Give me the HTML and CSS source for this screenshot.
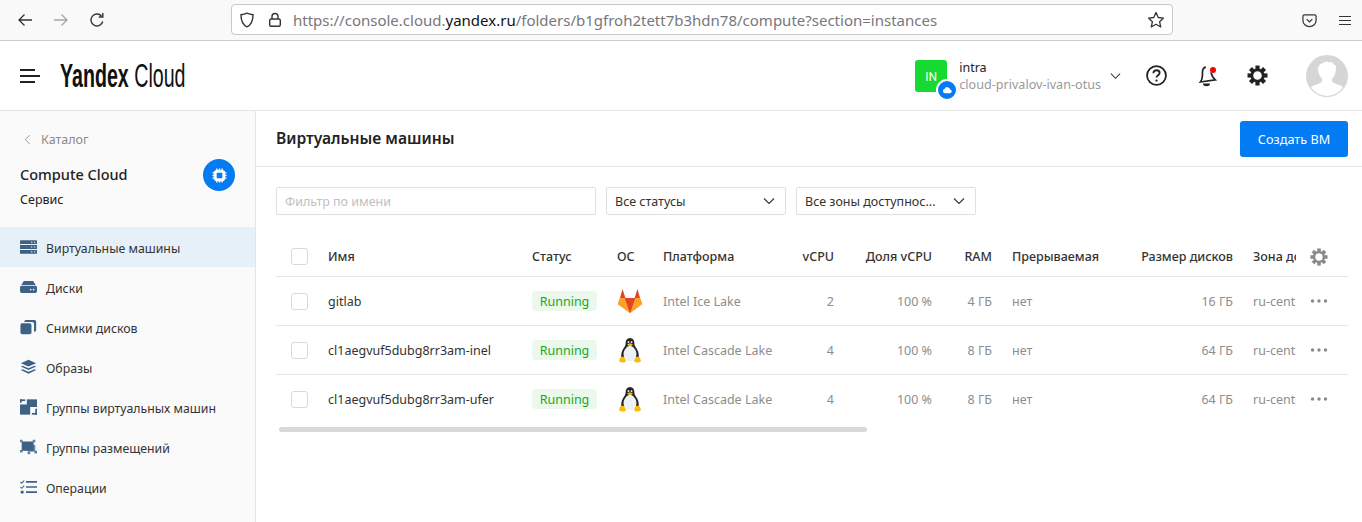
FILE: index.html
```html
<!DOCTYPE html>
<html lang="en">

<head>
    <meta charset="UTF-8">
    <title>Виртуальные машины</title>
    <link rel="stylesheet" href="styles.css">
</head>

<body>
    <svg class="defs" width="0" height="0">
        <symbol id="gear" viewBox="0 0 20 20">
            <circle cx="10" cy="10" r="5.400" fill="none" stroke="currentColor" stroke-width="2.600"/>
            <g fill="currentColor">
                <rect x="8" y="0.500" width="4" height="4"/>
                <rect x="8" y="15.500" width="4" height="4"/>
                <rect x="0.500" y="8" width="4" height="4"/>
                <rect x="15.500" y="8" width="4" height="4"/>
                <rect x="8" y="0.500" width="4" height="4" transform="rotate(45 10 10)"/>
                <rect x="8" y="15.500" width="4" height="4" transform="rotate(45 10 10)"/>
                <rect x="0.500" y="8" width="4" height="4" transform="rotate(45 10 10)"/>
                <rect x="15.500" y="8" width="4" height="4" transform="rotate(45 10 10)"/>
            </g>
        </symbol>
        <symbol id="tux" viewBox="0 0 24 28">
            <path d="M12 1C9 1 7.500 3.300 7.500 6c0 2.500-.5 3.500-2 5.500C3.800 14 2.500 17 3 21l18 0c.5-4-.8-7-2.500-9.500-1.500-2-2-3-2-5.500C16.500 3.300 15 1 12 1z" fill="#24242a"/>
            <path d="M12 9C9 9 5.300 13.500 5.300 17.500c0 4.500 2.700 7.500 6.700 7.500s6.700-3 6.700-7.500C18.700 13.500 15 9 12 9z" fill="#eef1f3"/>
            <path d="M9.300 7.400c1-.8 4.400-.8 5.400 0 .4.400-1.500 2.200-2.700 2.200S8.900 7.800 9.300 7.400z" fill="#f7b90f"/>
            <circle cx="10.400" cy="5.300" r="1" fill="#fff"/>
            <circle cx="13.600" cy="5.300" r="1" fill="#fff"/>
            <path d="M4 20.500c1.300-.3 2.200.8 2.800 2 .6 1.200 1.200 2 .8 2.900-.6 1-2.700 1.300-4 1-1.200-.2-2.500-.9-3-1.400-.4-.5.600-1.400.7-2.300.1-.9.700-1.900 2.700-2.200zM20 20.500c-1.300-.3-2.200.8-2.800 2-.6 1.200-1.200 2-.8 2.900.6 1 2.700 1.300 4 1 1.200-.2 2.500-.9 3-1.400.4-.5-.6-1.400-.7-2.300-.1-.9-.7-1.900-2.700-2.200z" fill="#fcb90c"/>
        </symbol>
        <symbol id="chevron" viewBox="0 0 12 8">
            <path d="M1 1.500l5 5 5-5" fill="none" stroke="currentColor" stroke-width="1.100"/>
        </symbol>
        <symbol id="dots" viewBox="0 0 18 4">
            <circle cx="2.500" cy="2" r="1.700" fill="currentColor"/>
            <circle cx="9" cy="2" r="1.700" fill="currentColor"/>
            <circle cx="15.500" cy="2" r="1.700" fill="currentColor"/>
        </symbol>
    </svg>

    <div class="browser-bar">
        <svg class="nav-icon nav-back" viewBox="0 0 16 16"><path d="M15 8H2M7.500 2.500L2 8l5.500 5.500" fill="none" stroke="currentColor" stroke-width="1.300"/></svg>
        <svg class="nav-icon nav-forward" viewBox="0 0 16 16"><path d="M1 8h13M8.500 2.500L14 8l-5.500 5.500" fill="none" stroke="currentColor" stroke-width="1.300"/></svg>
        <svg class="nav-icon nav-reload" viewBox="0 0 16 16"><path d="M13.800 9.500A6 6 0 1 1 12.500 4M13.800 1v4h-4" fill="none" stroke="currentColor" stroke-width="1.400"/></svg>
        <div class="url-box">
            <svg class="url-shield" viewBox="0 0 16 16"><path d="M8 1.200c2 1 4 1.400 6 1.500 0 6-1.500 10-6 12.100C3.500 12.700 2 8.700 2 2.700c2-.1 4-.5 6-1.500z" fill="none" stroke="#33333a" stroke-width="1.400"/></svg>
            <svg class="url-lock" viewBox="0 0 14 16"><path d="M4 7V4.500a3 3 0 0 1 6 0V7" fill="none" stroke="#33333a" stroke-width="1.400"/><rect x="1.700" y="7" width="10.600" height="7.300" rx="1.500" fill="none" stroke="#33333a" stroke-width="1.400"/></svg>
            <span class="url-text">https://console.cloud.<b>yandex.ru</b>/folders/b1gfroh2tett7b3hdn78/compute?section=instances</span>
            <svg class="url-star" viewBox="0 0 18 18"><path d="M9 1.500l2.300 5 5.200.6-3.900 3.600 1.100 5.300L9 13.300 4.300 16l1.100-5.300L1.500 7.100l5.200-.6z" fill="none" stroke="#33333a" stroke-width="1.300" stroke-linejoin="round"/></svg>
        </div>
        <svg class="pocket" viewBox="0 0 16 16"><path d="M2.500 2h11A1.500 1.500 0 0 1 15 3.500V8a7 6.500 0 0 1-14 0V3.500A1.500 1.500 0 0 1 2.500 2z" fill="none" stroke="#33333a" stroke-width="1.300"/><path d="M5 6.500l3 3 3-3" fill="none" stroke="#33333a" stroke-width="1.300"/></svg>
        <div class="burger burger-browser"><i></i><i></i><i></i></div>
    </div>

    <header class="top">
        <div class="burger burger-menu"><i class="short"></i><i></i><i class="short"></i></div>
        <div class="logo"><div class="logo-text"><b>Yandex</b> <span>Cloud</span></div></div>

        <div class="org">
            <div class="org-badge">IN
                <span class="org-cloud">
                    <svg viewBox="0 0 12 8"><path d="M3 7.500a2.300 2.300 0 0 1-.3-4.500 3.300 3.300 0 0 1 6.300.4A2.100 2.100 0 0 1 9 7.500z" fill="#fff"/></svg>
                </span>
            </div>
            <div class="org-text">
                <div class="org-name">intra</div>
                <div class="org-cloud-name">cloud-privalov-ivan-otus</div>
            </div>
            <svg class="org-chevron"><use href="#chevron"/></svg>
        </div>

        <svg class="top-icon help" viewBox="0 0 20 20">
            <circle cx="10" cy="10" r="9" fill="none" stroke="currentColor" stroke-width="1.700"/>
            <path d="M7 7.800c0-1.800 1.400-2.800 3-2.800s3 1 3 2.600c0 2.200-3 2.200-3 4.400" fill="none" stroke="currentColor" stroke-width="1.700"/>
            <circle cx="10" cy="14.800" r="1.100" fill="currentColor"/>
        </svg>
        <div class="bell">
            <svg viewBox="0 0 20 22">
                <path d="M10 2C6.800 2 6 4.500 5.700 8c-.3 3.500-1.200 6-3.200 8l15 0c-2-2-2.900-4.500-3.200-8" fill="none" stroke="currentColor" stroke-width="1.700" transform="rotate(-8 10 10)"/>
                <path d="M6 18.500a3.500 2.800 0 0 0 7 0z" fill="currentColor"/>
            </svg>
            <span class="bell-dot"></span>
        </div>
        <svg class="top-icon settings"><use href="#gear"/></svg>
        <div class="avatar">
            <svg viewBox="0 0 42 42"><path d="M20 6.500l3 .8 3-.3 2 2.500 2 1.500-.2 4c-.2 3.500-1.500 6.500-3.800 9-.5 2 .5 3.500 3 4.500 4 1.500 6.500 2 8 4A21 21 0 0 1 21 41 21 21 0 0 1 5 32.500c1.500-2 4-2.500 8-4 2.500-1 3.500-2.500 3-4.500-2-2.500-3.700-5.500-4-9-.2-2.500.5-4 2-5.500z" fill="#fff"/></svg>
        </div>
    </header>

    <div class="layout">
        <aside class="sidebar">
            <div class="back">
                <svg viewBox="0 0 8 12"><path d="M6.500 1L1.500 6l5 5" fill="none" stroke="currentColor" stroke-width="1"/></svg>
                Каталог
            </div>
            <div class="service">
                <div>
                    <div class="service-name">Compute Cloud</div>
                    <div class="service-type">Сервис</div>
                </div>
                <span class="service-icon">
                    <svg viewBox="0 0 16 16">
                        <rect x="3.500" y="3.500" width="9" height="9" rx="1.500" fill="none" stroke="#fff" stroke-width="3"/>
                        <path d="M5.200 .5v3M8 .5v3M10.800 .5v3M5.200 12.500v3M8 12.500v3M10.800 12.500v3M.5 5.200h3M.5 8h3M.5 10.800h3M12.500 5.200h3M12.500 8h3M12.500 10.800h3" stroke="#fff" stroke-width="1.500"/>
                    </svg>
                </span>
            </div>
            <nav class="menu">
                <a class="menu-item active">
                    <svg viewBox="0 0 20 16"><path d="M1 0h18a1 1 0 0 1 1 1v3.600H0V1a1 1 0 0 1 1-1zM0 5.700h20v4.600H0zM0 11.400h20V15a1 1 0 0 1-1 1H1a1 1 0 0 1-1-1z" fill="currentColor"/><path d="M13 2.300h1.500M16.500 2.300H18M13 8h1.500M16.500 8H18M13 13.700h1.500M16.500 13.700H18" stroke="#e6f0f8" stroke-width="1.200"/></svg>
                    Виртуальные машины
                </a>
                <a class="menu-item">
                    <svg viewBox="0 0 20 16"><path d="M4.500 1h11l3 4.500H1.500z" fill="currentColor"/><path d="M2 6.500h16a2 2 0 0 1 2 2V13a2 2 0 0 1-2 2H2a2 2 0 0 1-2-2V8.500a2 2 0 0 1 2-2z" fill="currentColor"/><circle cx="12.500" cy="11" r="1" fill="#fafafa"/><circle cx="16" cy="11" r="1" fill="#fafafa"/></svg>
                    Диски
                </a>
                <a class="menu-item">
                    <svg viewBox="0 0 20 18"><rect x="0.500" y="4.500" width="13" height="13" rx="2" fill="currentColor"/><path d="M5 2.700V3h9.500a2.500 2.500 0 0 1 2 2v9.500h.5a2 2 0 0 0 2-2V2.700a2 2 0 0 0-2-2H7a2 2 0 0 0-2 2z" fill="currentColor"/></svg>
                    Снимки дисков
                </a>
                <a class="menu-item">
                    <svg viewBox="0 0 20 17"><path d="M10 0l9 4-9 4-9-4z" fill="currentColor"/><path d="M1 8l2-1 7 3 7-3 2 1-9 4z" fill="currentColor"/><path d="M1 12l2-1 7 3 7-3 2 1-9 4.500z" fill="currentColor"/></svg>
                    Образы
                </a>
                <a class="menu-item">
                    <svg viewBox="0 0 20 18"><rect x="0" y="6" width="12" height="12" fill="currentColor"/><rect x="8" y="0" width="12" height="9" fill="currentColor"/><rect x="0" y="0" width="6" height="2" fill="currentColor"/><rect x="0" y="0" width="2" height="4" fill="currentColor"/><rect x="14" y="16" width="6" height="2" fill="currentColor"/><rect x="18" y="11" width="2" height="7" fill="currentColor"/></svg>
                    Группы виртуальных машин
                </a>
                <a class="menu-item">
                    <svg viewBox="0 0 20 17"><rect x="2" y="2" width="14" height="11" fill="currentColor"/><rect x="9" y="6" width="9" height="8" fill="currentColor" opacity=".75"/><path d="M0 0h3v3H0zM15 0h3v3h-3zM0 12h3v3H0zM17 13h3v3h-3zM9 14h3v3H9z" fill="currentColor" opacity=".8"/></svg>
                    Группы размещений
                </a>
                <a class="menu-item">
                    <svg viewBox="0 0 20 16"><path d="M7 2h13M7 8h13M7 14h13" stroke="currentColor" stroke-width="2"/><path d="M.5 2l1.500 1.500L5 .5M.5 8L2 9.500l3-3" fill="none" stroke="currentColor" stroke-width="1.200"/><circle cx="2.500" cy="14" r="2" fill="currentColor"/></svg>
                    Операции
                </a>
            </nav>
        </aside>

        <main class="content">
            <div class="title-row">
                <h1 class="title">Виртуальные машины</h1>
                <button class="create">Создать ВМ</button>
            </div>

            <div class="filters">
                <div class="filter-input">Фильтр по имени</div>
                <div class="select">Все статусы <svg><use href="#chevron"/></svg></div>
                <div class="select">Все зоны доступнос... <svg><use href="#chevron"/></svg></div>
            </div>

            <div class="table">
                <div class="row head">
                    <div class="cell"><span class="check check-head"></span></div>
                    <div class="cell">Имя</div>
                    <div class="cell">Статус</div>
                    <div class="cell">ОС</div>
                    <div class="cell">Платформа</div>
                    <div class="cell right">vCPU</div>
                    <div class="cell right">Доля vCPU</div>
                    <div class="cell right">RAM</div>
                    <div class="cell">Прерываемая</div>
                    <div class="cell right">Размер дисков</div>
                    <div class="cell clip">Зона доступности</div>
                    <div class="cell action"><svg class="head-gear"><use href="#gear"/></svg></div>
                </div>

                <div class="row">
                    <div class="cell"><span class="check"></span></div>
                    <div class="cell name">gitlab</div>
                    <div class="cell"><span class="status">Running</span></div>
                    <div class="cell">
                        <svg class="os-icon gitlab" viewBox="0 0 26 24">
                            <path d="M13 24L0.800 15 3 9h20l2.200 6z" fill="#fc6d26"/>
                            <path d="M13 24L0.800 15 3 9h4.800z" fill="#fca326"/>
                            <path d="M13 24l12.200-9L23 9h-4.800z" fill="#fca326"/>
                            <path d="M13 24L7.800 9h10.400z" fill="#e24329"/>
                            <path d="M3 9L5.500 0l2.900 9zM23 9L20.500 0l-2.900 9z" fill="#e24329"/>
                        </svg>
                    </div>
                    <div class="cell muted">Intel Ice Lake</div>
                    <div class="cell right muted">2</div>
                    <div class="cell right muted">100 %</div>
                    <div class="cell right muted">4 ГБ</div>
                    <div class="cell muted">нет</div>
                    <div class="cell right muted">16 ГБ</div>
                    <div class="cell clip muted">ru-central1-a</div>
                    <div class="cell action"><svg class="dots"><use href="#dots"/></svg></div>
                </div>

                <div class="row">
                    <div class="cell"><span class="check"></span></div>
                    <div class="cell name">cl1aegvuf5dubg8rr3am-inel</div>
                    <div class="cell"><span class="status">Running</span></div>
                    <div class="cell"><svg class="os-icon"><use href="#tux"/></svg></div>
                    <div class="cell muted">Intel Cascade Lake</div>
                    <div class="cell right muted">4</div>
                    <div class="cell right muted">100 %</div>
                    <div class="cell right muted">8 ГБ</div>
                    <div class="cell muted">нет</div>
                    <div class="cell right muted">64 ГБ</div>
                    <div class="cell clip muted">ru-central1-a</div>
                    <div class="cell action"><svg class="dots"><use href="#dots"/></svg></div>
                </div>

                <div class="row last">
                    <div class="cell"><span class="check"></span></div>
                    <div class="cell name">cl1aegvuf5dubg8rr3am-ufer</div>
                    <div class="cell"><span class="status">Running</span></div>
                    <div class="cell"><svg class="os-icon"><use href="#tux"/></svg></div>
                    <div class="cell muted">Intel Cascade Lake</div>
                    <div class="cell right muted">4</div>
                    <div class="cell right muted">100 %</div>
                    <div class="cell right muted">8 ГБ</div>
                    <div class="cell muted">нет</div>
                    <div class="cell right muted">64 ГБ</div>
                    <div class="cell clip muted">ru-central1-a</div>
                    <div class="cell action"><svg class="dots"><use href="#dots"/></svg></div>
                </div>
            </div>

            <div class="scrollbar"></div>
        </main>
    </div>
</body>

</html>
```

FILE: styles.css
```css
* {
    box-sizing: border-box;
}

html,
body {
    height: 522px;
    margin: 0;
    overflow: hidden;
}

body {
    display: flex;
    flex-direction: column;
    font-family: "Noto Sans", sans-serif;
    font-size: 12.500px;
    color: #2b2b2b;
    background: #fff;
}

.defs {
    display: none;
}

/* browser chrome */
.browser-bar {
    display: flex;
    align-items: center;
    height: 41px;
    flex: none;
    padding-left: 17px;
    background: #f9f9fa;
    border-bottom: 1px solid #ccc;
}

.nav-icon {
    width: 16px;
    height: 16px;
    color: #33333a;
}

.nav-forward {
    margin-left: 20px;
    color: #a5a5a8;
}

.nav-reload {
    margin-left: 20px;
}

.url-box {
    display: flex;
    align-items: center;
    width: 942px;
    height: 31px;
    margin-left: 126px;
    margin-top: -1px;
    padding: 0 7px;
    background: #fff;
    border: 1px solid #c8c8c8;
    border-radius: 4px;
}

.url-shield {
    width: 16px;
    height: 16px;
}

.url-lock {
    width: 14px;
    height: 16px;
    margin-left: 13px;
}

.url-text {
    margin-left: 11px;
    font-size: 15px;
    white-space: nowrap;
    color: #77777c;
}

.url-text b {
    font-weight: 400;
    color: #111;
}

.url-star {
    width: 18px;
    height: 18px;
    margin-left: auto;
}

.pocket {
    width: 15px;
    height: 15px;
    margin-left: 129px;
}

.burger {
    display: flex;
    flex-direction: column;
    justify-content: space-between;
}

.burger i {
    display: block;
    height: 2px;
    background: #222;
}

.burger-browser {
    width: 12px;
    height: 9px;
    margin-left: 22px;
}

.burger-browser i {
    height: 1px;
    background: #33333a;
}

/* app header */
.top {
    display: flex;
    align-items: center;
    flex: none;
    height: 70px;
    padding: 0 14px 0 20px;
    border-bottom: 1px solid #e5e5e5;
}

.burger-menu {
    width: 20px;
    height: 14px;
}

.burger-menu .short {
    width: 15px;
}

.logo {
    width: 125px;
    margin-left: 20px;
}

.logo-text {
    font-family: "Liberation Sans", sans-serif;
    font-size: 33px;
    line-height: 36px;
    white-space: nowrap;
    color: #111;
    transform: scaleX(0.595);
    transform-origin: left center;
}

.logo b {
    font-weight: 700;
}

.logo span {
    font-weight: 400;
}

.org {
    display: flex;
    align-items: center;
    margin-left: auto;
}

.org-badge {
    position: relative;
    width: 32px;
    height: 32px;
    background: #16d932;
    border-radius: 3px;
    color: #fff;
    font-family: Roboto, sans-serif;
    font-size: 12px;
    line-height: 34px;
    text-align: center;
}

.org-cloud {
    position: absolute;
    right: -11px;
    bottom: -9px;
    display: flex;
    align-items: center;
    justify-content: center;
    width: 22px;
    height: 22px;
    background: #027bf3;
    border: 2px solid #fff;
    border-radius: 50%;
}

.org-cloud svg {
    width: 11px;
    height: 8px;
}

.org-text {
    margin-left: 12px;
    line-height: 17px;
}

.org-name {
    color: #222;
}

.org-cloud-name {
    font-size: 12.600px;
    color: #9a9a9a;
}

.org-chevron {
    width: 11px;
    height: 8px;
    margin-left: 9px;
    color: #333;
}

.top-icon {
    width: 21px;
    height: 21px;
}

.help {
    margin-left: 25px;
    color: #222;
}

.bell {
    position: relative;
    width: 20px;
    height: 22px;
    margin-left: 30px;
    color: #222;
}

.bell svg {
    display: block;
    width: 20px;
    height: 22px;
}

.bell-dot {
    position: absolute;
    top: 2px;
    right: 1px;
    width: 6px;
    height: 6px;
    background: #ff0000;
    border-radius: 50%;
}

.settings {
    margin-left: 30px;
    color: #222;
}

.avatar {
    width: 42px;
    height: 42px;
    margin-left: 38px;
    border-radius: 50%;
    background: #d6d6d6;
    overflow: hidden;
}

.avatar svg {
    display: block;
    width: 42px;
    height: 42px;
}

/* page */
.layout {
    display: flex;
    flex: 1;
    min-height: 0;
}

.sidebar {
    flex: none;
    width: 256px;
    padding-top: 18px;
    background: #fafafa;
    border-right: 1px solid #e5e5e5;
}

.back {
    display: flex;
    align-items: center;
    gap: 10px;
    height: 20px;
    padding-left: 24px;
    color: #8a8a8a;
}

.back svg {
    width: 7px;
    height: 11px;
}

.service {
    display: flex;
    justify-content: space-between;
    align-items: flex-start;
    height: 78px;
    padding: 10px 20px 0;
}

.service-name {
    font-size: 14.500px;
    font-weight: 500;
    line-height: 30px;
    color: #222;
}

.service-type {
    margin-top: 1px;
    line-height: 20px;
    color: #222;
}

.service-icon {
    display: flex;
    align-items: center;
    justify-content: center;
    width: 32px;
    height: 32px;
    background: #027bf3;
    border-radius: 50%;
}

.service-icon svg {
    width: 15px;
    height: 15px;
}

.menu-item {
    display: flex;
    align-items: center;
    gap: 9px;
    height: 40px;
    padding: 2px 0 0 20px;
    font-size: 12.300px;
    color: #333;
    white-space: nowrap;
}

.menu-item svg {
    flex: none;
    width: 17px;
    height: 16px;
    margin-top: -2px;
    color: #3e6286;
}

.menu-item.active {
    background: #e6f0f8;
}

.content {
    flex: 1;
    min-width: 0;
    padding-right: 14px;
}

.title-row {
    display: flex;
    align-items: center;
    justify-content: space-between;
    height: 56px;
    margin-right: -14px;
    padding: 0 14px 0 20px;
    border-bottom: 1px solid #e5e5e5;
}

.title {
    margin: 0 0 2px;
    font-size: 15.600px;
    font-weight: 600;
    color: #222;
}

.create {
    width: 108px;
    height: 36px;
    padding: 0;
    background: #027bf3;
    border: 0;
    border-radius: 3px;
    color: #fff;
    font-family: inherit;
    font-size: 12.700px;
}

.filters {
    display: flex;
    gap: 10px;
    margin: 20px 0 0 20px;
}

.filter-input,
.select {
    display: flex;
    align-items: center;
    height: 28px;
    padding: 0 8px;
    border: 1px solid #e0e0e0;
    border-radius: 2px;
}

.filter-input {
    width: 320px;
    color: #c0c0c0;
}

.select {
    justify-content: space-between;
    width: 180px;
    color: #333;
}

.select svg {
    width: 12px;
    height: 8px;
    margin-right: 2px;
    color: #333;
}

.table {
    margin: 22px 0 0 20px;
}

.row {
    display: grid;
    grid-template-columns: 52px 204px 85px 46px 120px 71px 98px 60px 109px 132px 43px 52px;
    align-items: center;
    height: 49px;
    border-bottom: 1px solid #e5e5e5;
}

.row.head {
    height: 40px;
    font-weight: 500;
    color: #333;
}

.row.last {
    border-bottom-color: transparent;
}

.cell {
    line-height: 20px;
    white-space: nowrap;
}

.cell.right {
    padding-right: 20px;
    text-align: right;
}

.cell.clip {
    overflow: hidden;
}

.cell.muted {
    padding-top: 2px;
    color: #8d8d8d;
}

.cell.name {
    padding-top: 2px;
    color: #333;
}

.cell.action {
    display: flex;
    padding-left: 14px;
}

.check {
    display: block;
    width: 17px;
    height: 17px;
    margin-left: 15px;
    border: 1px solid #d9d9d9;
    border-radius: 3px;
}

.status {
    display: block;
    width: 65px;
    height: 20px;
    background: #ecf8ec;
    border-radius: 4px;
    color: #17a81f;
    line-height: 22px;
    text-align: center;
}

.os-icon {
    display: block;
    width: 26px;
    height: 27px;
}

.os-icon.gitlab {
    height: 24px;
}

.dots {
    width: 18px;
    height: 4px;
    color: #8a8a8a;
}

.head-gear {
    width: 18px;
    height: 18px;
    color: #8a8a8a;
}

.scrollbar {
    width: 588px;
    height: 5px;
    margin: 3px 0 0 23px;
    background: #d9d9d9;
    border-radius: 3px;
}
```
